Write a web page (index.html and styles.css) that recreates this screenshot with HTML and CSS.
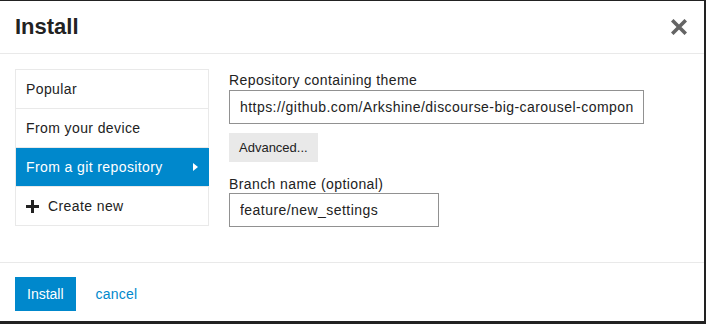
FILE: index.html
```html
<!DOCTYPE html>
<html lang="en">
<head>
    <meta charset="UTF-8">
    <meta name="viewport" content="width=device-width, initial-scale=1.0">
    <title>Install theme</title>
    <link rel="stylesheet" href="styles.css">
</head>
<body>
    <div class="modal">
        <div class="modal-header">
            <h3>Install</h3>
            <button class="close" type="button" aria-label="close">
                <svg width="16" height="16" viewBox="0 0 16 16">
                    <path d="M2.5 2.5 L13.5 13.5 M13.5 2.5 L2.5 13.5" stroke="#646464" stroke-width="3.6" stroke-linecap="square" fill="none"/>
                </svg>
            </button>
        </div>

        <div class="modal-body">
            <ul class="install-types">
                <li>Popular</li>
                <li>From your device</li>
                <li class="selected">
                    From a git repository
                    <span class="caret"></span>
                </li>
                <li class="create">
                    <svg width="13" height="13" viewBox="0 0 13 13">
                        <rect x="5" y="0" width="3" height="13" fill="#222"/>
                        <rect x="0" y="5" width="13" height="3" fill="#222"/>
                    </svg>
                    Create new
                </li>
            </ul>

            <div class="repo-form">
                <label for="repo" class="field-label">Repository containing theme</label>
                <input type="text" id="repo" class="repo-input" value="https://github.com/Arkshine/discourse-big-carousel-component">
                <button type="button" class="btn-advanced">Advanced...</button>
                <label for="branch" class="field-label branch-label">Branch name (optional)</label>
                <input type="text" id="branch" class="branch-input" value="feature/new_settings">
            </div>
        </div>

        <div class="modal-footer">
            <button type="button" class="btn-primary">Install</button>
            <a href="#" class="cancel">cancel</a>
        </div>
    </div>
</body>
</html>
```

FILE: styles.css
```css
body {
    margin: 0;
    padding-top: 1px;
    background: #222;
    font-family: "Liberation Sans", Arial, sans-serif;
    color: #222;
}
.modal {
    width: 704px;
    height: 320px;
    background: #fff;
    overflow: hidden;
}
.modal-header {
    height: 52px;
    padding: 0 17px 0 15px;
    display: flex;
    align-items: center;
    justify-content: space-between;
    border-bottom: 1px solid #e9e9e9;
}
.modal-header h3 {
    margin: 0;
    font-size: 22px;
    font-weight: bold;
    color: #222;
}
.close {
    background: none;
    border: none;
    padding: 0;
    width: 16px;
    height: 16px;
    cursor: pointer;
}
.close svg {
    display: block;
}
.modal-body {
    display: flex;
    gap: 20px;
    padding: 15px 15px 35px;
    height: 158px;
}
.install-types {
    list-style: none;
    margin: 0;
    padding: 0;
    width: 194px;
    height: 157px;
    box-sizing: border-box;
    border: 1px solid #e9e9e9;
    border-bottom: none;
}
.install-types li {
    height: 38px;
    border-bottom: 1px solid #e9e9e9;
    padding: 0 10px;
    display: flex;
    align-items: center;
    font-size: 14px;
    letter-spacing: 0.4px;
    cursor: pointer;
}
.install-types li.selected {
    background: #0088cc;
    color: #fff;
    justify-content: space-between;
    margin-right: -1px;
    padding-right: 11px;
}
.caret {
    width: 0;
    height: 0;
    border-top: 4px solid transparent;
    border-bottom: 4px solid transparent;
    border-left: 5px solid #fff;
}
.install-types li.create {
    gap: 9px;
}
.install-types li.create svg {
    display: block;
}
.repo-form {
    display: flex;
    flex-direction: column;
    align-items: flex-start;
}
.field-label {
    font-size: 14px;
    letter-spacing: 0.4px;
    line-height: 18px;
    margin: 2px 0 1px;
}
.branch-label {
    margin-top: 13px;
    margin-bottom: 0;
}
.repo-form input {
    height: 34px;
    box-sizing: border-box;
    border: 1px solid #919191;
    border-radius: 0;
    padding: 0 10px;
    font-family: "Liberation Sans", Arial, sans-serif;
    font-size: 14px;
    letter-spacing: 0.45px;
    color: #222;
    outline: none;
}
.repo-input {
    width: 415px;
}
.branch-input {
    width: 210px;
}
.btn-advanced {
    margin-top: 9px;
    height: 30px;
    padding: 0 10px;
    border: none;
    background: #e9e9e9;
    color: #222;
    font-family: "Liberation Sans", Arial, sans-serif;
    font-size: 13px;
    cursor: pointer;
}
.modal-footer {
    border-top: 1px solid #e9e9e9;
    padding: 14px 15px 10px;
    display: flex;
    align-items: center;
    gap: 20px;
}
.btn-primary {
    height: 34px;
    padding: 0 12px;
    border: none;
    background: #0088cc;
    color: #fff;
    font-family: "Liberation Sans", Arial, sans-serif;
    font-size: 14px;
    cursor: pointer;
}
.cancel {
    color: #0088cc;
    text-decoration: none;
    font-size: 14px;
    letter-spacing: 0.2px;
}
```
